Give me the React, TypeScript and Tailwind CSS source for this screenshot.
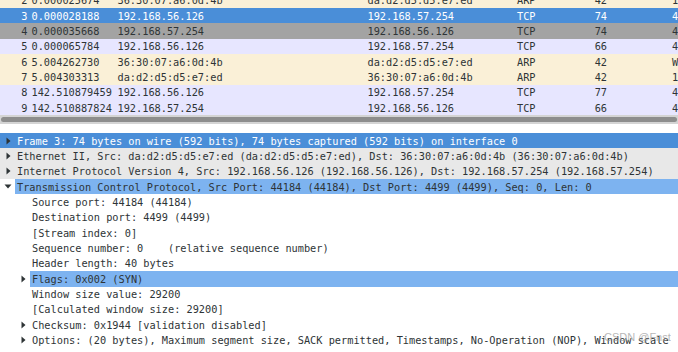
import React from 'react';

type Packet = {
    no: number;
    time: string;
    src: string;
    dst: string;
    proto: string;
    len: number;
    info: string;
    tone: 'sel' | 'gray' | 'tcp' | 'arp';
};

const packets: Packet[] = [
    { no: 2, time: '0.000025674', src: '36:30:07:a6:0d:4b', dst: 'da:d2:d5:d5:e7:ed', proto: 'ARP', len: 42, info: '192.168.57.254 is at 36:30:07:a6:0d:4b', tone: 'arp' },
    { no: 3, time: '0.000028188', src: '192.168.56.126', dst: '192.168.57.254', proto: 'TCP', len: 74, info: '44184 → 4499 [SYN] Seq=0 Win=29200 Len=0', tone: 'sel' },
    { no: 4, time: '0.000035668', src: '192.168.57.254', dst: '192.168.56.126', proto: 'TCP', len: 74, info: '4499 → 44184 [SYN, ACK] Seq=0 Ack=1', tone: 'gray' },
    { no: 5, time: '0.000065784', src: '192.168.56.126', dst: '192.168.57.254', proto: 'TCP', len: 66, info: '44184 → 4499 [ACK] Seq=1 Ack=1', tone: 'tcp' },
    { no: 6, time: '5.004262730', src: '36:30:07:a6:0d:4b', dst: 'da:d2:d5:d5:e7:ed', proto: 'ARP', len: 42, info: 'Who has 192.168.56.126? Tell 192.168.57.254', tone: 'arp' },
    { no: 7, time: '5.004303313', src: 'da:d2:d5:d5:e7:ed', dst: '36:30:07:a6:0d:4b', proto: 'ARP', len: 42, info: '192.168.56.126 is at da:d2:d5:d5:e7:ed', tone: 'arp' },
    { no: 8, time: '142.510879459', src: '192.168.56.126', dst: '192.168.57.254', proto: 'TCP', len: 77, info: '44184 → 4499 [PSH, ACK] Seq=1 Ack=1', tone: 'tcp' },
    { no: 9, time: '142.510887824', src: '192.168.57.254', dst: '192.168.56.126', proto: 'TCP', len: 66, info: '4499 → 44184 [ACK] Seq=1 Ack=12', tone: 'tcp' },
];

const toneClass: Record<Packet['tone'], string> = {
    sel: 'bg-[#4a8ed8] text-white',
    gray: 'bg-[#a3a3a3] text-[#2e3436]',
    tcp: 'bg-[#e7e6ff] text-[#2e3436]',
    arp: 'bg-[#faf0d7] text-[#2e3436]',
};

type Node = {
    level: 0 | 1;
    text: string;
    arrow?: 'right' | 'down';
    hl?: 'sel' | 'gray' | 'light';
};

const tree: Node[] = [
    { level: 0, arrow: 'right', hl: 'sel', text: 'Frame 3: 74 bytes on wire (592 bits), 74 bytes captured (592 bits) on interface 0' },
    { level: 0, arrow: 'right', hl: 'gray', text: 'Ethernet II, Src: da:d2:d5:d5:e7:ed (da:d2:d5:d5:e7:ed), Dst: 36:30:07:a6:0d:4b (36:30:07:a6:0d:4b)' },
    { level: 0, arrow: 'right', hl: 'gray', text: 'Internet Protocol Version 4, Src: 192.168.56.126 (192.168.56.126), Dst: 192.168.57.254 (192.168.57.254)' },
    { level: 0, arrow: 'down', hl: 'light', text: 'Transmission Control Protocol, Src Port: 44184 (44184), Dst Port: 4499 (4499), Seq: 0, Len: 0' },
    { level: 1, text: 'Source port: 44184 (44184)' },
    { level: 1, text: 'Destination port: 4499 (4499)' },
    { level: 1, text: '[Stream index: 0]' },
    { level: 1, text: 'Sequence number: 0    (relative sequence number)' },
    { level: 1, text: 'Header length: 40 bytes' },
    { level: 1, arrow: 'right', hl: 'light', text: 'Flags: 0x002 (SYN)' },
    { level: 1, text: 'Window size value: 29200' },
    { level: 1, text: '[Calculated window size: 29200]' },
    { level: 1, arrow: 'right', text: 'Checksum: 0x1944 [validation disabled]' },
    { level: 1, arrow: 'right', text: 'Options: (20 bytes), Maximum segment size, SACK permitted, Timestamps, No-Operation (NOP), Window scale' },
];

const Arrow = ({ dir }: { dir: 'right' | 'down' }) =>
    dir === 'right' ? (
        <svg width="5" height="8" viewBox="0 0 5 8" className="block">
            <path d="M0.5 0.5 L4.5 4 L0.5 7.5 Z" fill="#2e3436" />
        </svg>
    ) : (
        <svg width="8" height="5" viewBox="0 0 8 5" className="block">
            <path d="M0.5 0.5 L7.5 0.5 L4 4.5 Z" fill="#2e3436" />
        </svg>
    );

const TreeRow = ({ node }: { node: Node }) => {
    const full = node.hl === 'sel' || node.hl === 'gray';
    const rowBg = node.hl === 'sel' ? 'bg-[#4a8ed8]' : node.hl === 'gray' ? 'bg-[#e8e8e8]' : '';
    const textBg = node.hl === 'light' ? 'bg-[#7db3f0]' : '';
    const textColor = node.hl === 'sel' ? 'text-white' : 'text-[#2e3436]';

    return (
        <div className={`flex h-[15.36px] items-stretch ${full ? rowBg : ''}`}>
            {node.level === 1 && <div className="w-[15px] shrink-0" />}
            <div className="flex w-[15px] shrink-0 items-center justify-center pl-[1px]">
                {node.arrow && <Arrow dir={node.arrow} />}
            </div>
            <div className={`flex flex-1 items-center whitespace-pre pl-[2px] ${textBg} ${textColor}`}>{node.text}</div>
        </div>
    );
};

const App = () => {
    return (
        <div
            className="relative h-[352px] w-[678px] overflow-hidden bg-white text-[10.27px] leading-none"
            style={{ fontFamily: '"DejaVu Sans Mono", "Liberation Mono", monospace' }}
        >
            {/* packet list */}
            <div className="-mt-[7.4px]">
                {packets.map((p) => (
                    <div key={p.no} className={`flex h-[15.36px] items-center whitespace-pre ${toneClass[p.tone]}`}>
                        <div className="w-[31.5px] shrink-0 pr-[4px] text-right">{p.no}</div>
                        <div className="w-[86px] shrink-0">{p.time}</div>
                        <div className="w-[250px] shrink-0">{p.src}</div>
                        <div className="w-[149.5px] shrink-0">{p.dst}</div>
                        <div className="w-[43px] shrink-0">{p.proto}</div>
                        <div className="w-[47px] shrink-0 text-right">{p.len}</div>
                        <div className="shrink-0 pl-[65px]">{p.info}</div>
                    </div>
                ))}
            </div>

            {/* horizontal scrollbar */}
            <div className="h-[9px] bg-[#d4d4d4] px-[1px] pt-[2px]">
                <div className="h-[5px] rounded-full bg-[#8d8d8d]" />
            </div>

            <div className="h-[8.5px]" />

            {/* packet details */}
            <div>
                {tree.map((n, i) => (
                    <TreeRow key={i} node={n} />
                ))}
            </div>

            <div
                className="absolute left-[604px] top-[332px] text-[11px] text-[#9a9a9a] opacity-70"
                style={{ fontFamily: '"Liberation Sans", Arial, sans-serif' }}
            >
                CSDN @Fnst
            </div>
        </div>
    );
};

export default App;
